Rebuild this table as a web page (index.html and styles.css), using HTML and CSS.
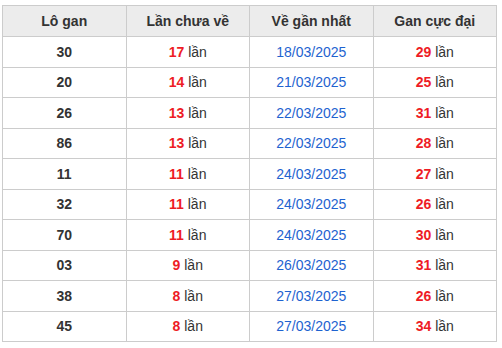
FILE: index.html
```html
<!DOCTYPE html>
<html lang="vi">
<head>
  <meta charset="UTF-8">
  <title>Lô gan</title>
  <link rel="stylesheet" href="styles.css">
</head>
<body>
  <table class="gan">
    <thead>
      <tr>
        <th>Lô gan</th>
        <th>Lần chưa về</th>
        <th>Về gần nhất</th>
        <th>Gan cực đại</th>
      </tr>
    </thead>
    <tbody>
      <tr><td class="num">30</td><td><b>17</b> lần</td><td class="date">18/03/2025</td><td><b>29</b> lần</td></tr>
      <tr><td class="num">20</td><td><b>14</b> lần</td><td class="date">21/03/2025</td><td><b>25</b> lần</td></tr>
      <tr><td class="num">26</td><td><b>13</b> lần</td><td class="date">22/03/2025</td><td><b>31</b> lần</td></tr>
      <tr><td class="num">86</td><td><b>13</b> lần</td><td class="date">22/03/2025</td><td><b>28</b> lần</td></tr>
      <tr><td class="num">11</td><td><b>11</b> lần</td><td class="date">24/03/2025</td><td><b>27</b> lần</td></tr>
      <tr><td class="num">32</td><td><b>11</b> lần</td><td class="date">24/03/2025</td><td><b>26</b> lần</td></tr>
      <tr><td class="num">70</td><td><b>11</b> lần</td><td class="date">24/03/2025</td><td><b>30</b> lần</td></tr>
      <tr><td class="num">03</td><td><b>9</b> lần</td><td class="date">26/03/2025</td><td><b>31</b> lần</td></tr>
      <tr><td class="num">38</td><td><b>8</b> lần</td><td class="date">27/03/2025</td><td><b>26</b> lần</td></tr>
      <tr><td class="num">45</td><td><b>8</b> lần</td><td class="date">27/03/2025</td><td><b>34</b> lần</td></tr>
    </tbody>
  </table>
</body>
</html>
```
FILE: styles.css
```css
body {
  margin: 0;
  padding: 5px 0 0 2px;
  background: #fff;
  font-family: 'Liberation Sans', Arial, sans-serif;
  font-size: 14px;
  color: #333;
}

.gan {
  width: 495px;
  border-collapse: collapse;
  table-layout: fixed;
}

.gan th,
.gan td {
  border: 1px solid #ccc;
  text-align: center;
  padding: 0;
}

.gan th {
  height: 30px;
  background-color: #ececec;
  font-weight: bold;
  color: #333;
}

.gan td {
  height: 29.5px;
}

.gan td b {
  color: #ee1c25;
}

.gan .num {
  font-weight: bold;
}

.gan .date {
  color: #1e63d0;
}
```
